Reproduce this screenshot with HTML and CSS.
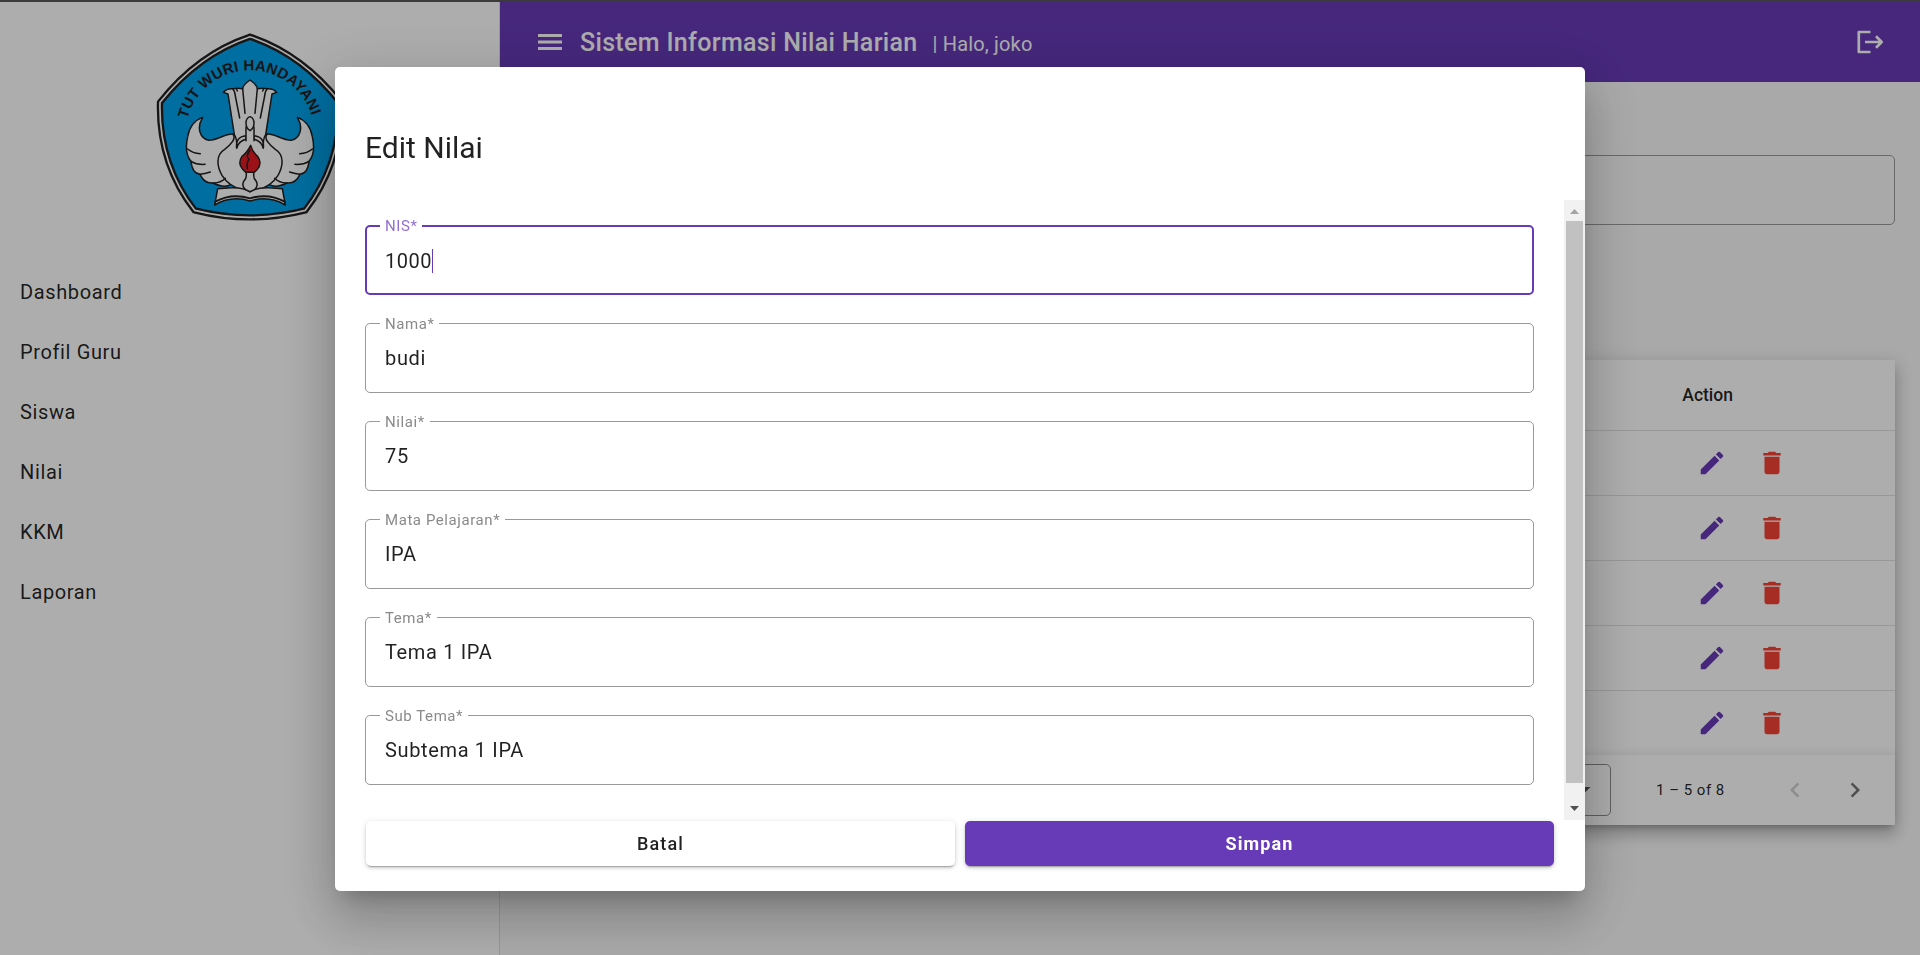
FILE: index.html
```html
<!DOCTYPE html>
<html lang="id">
<head>
<meta charset="utf-8">
<title>Sistem Informasi Nilai Harian</title>
<link rel="stylesheet" href="styles.css">
</head>
<body>
<svg class="defs" width="0" height="0">
  <symbol id="pencil" viewBox="0 0 24 24"><path d="M3 17.25V21h3.75L17.81 9.94l-3.75-3.75L3 17.25zM20.71 7.04a.996.996 0 0 0 0-1.41l-2.34-2.34a.996.996 0 0 0-1.41 0l-1.83 1.83 3.75 3.75 1.83-1.83z"/></symbol>
  <symbol id="trash" viewBox="0 0 24 24"><path d="M6 19c0 1.100.9 2 2 2h8c1.100 0 2-.9 2-2V7H6v12zM19 4h-3.500l-1-1h-5l-1 1H5v2h14V4z"/></symbol>
</svg>
<div class="app">
  <aside class="sidebar">
    <svg class="logo" viewBox="14 0 600 630">
      <defs><path id="arc" d="M126 297A194 194 0 0 1 502 297"/></defs>
      <path d="M314 50Q158 102 44 247Q39 430 148 571Q314 613 480 571Q589 430 584 247Q470 102 314 50Z" fill="#00a3ed" stroke="#231f20" stroke-width="19"/>
      <path d="M314 50Q158 102 44 247Q39 430 148 571Q314 613 480 571Q589 430 584 247Q470 102 314 50Z" fill="none" stroke="#fff" stroke-width="5"/>
      <text class="motto"><textPath href="#arc" textLength="502">TUT WURI HANDAYANI</textPath></text>
      <g fill="#fff" stroke="#231f20" stroke-width="4.500" stroke-linejoin="round" stroke-linecap="round">
        <path d="M273 382L248 222L234 217Q243 205 262 206Q278 203 292 206Q293 195 314 180Q335 195 336 206Q350 203 366 206Q385 205 394 217L380 222L355 382Z"/>
        <path d="M262 206Q269 213 270 228L283 294M292 206L299 280M336 206L329 280M366 206Q359 213 358 228L345 294M273 206L276 213M355 206L352 213" fill="none"/>
        <path d="M314 510C285 518 270 500 256 494Q236 505 203 489Q178 492 164 463Q140 460 137 424Q116 400 127 350Q135 305 172 292C152 325 165 355 190 361C220 360 240 340 262 342Q276 347 274 384Q276 362 302 354L326 354Q352 362 354 384Q352 347 366 342C388 340 408 360 438 361C463 355 476 325 456 292Q493 305 501 350Q512 400 491 424Q488 460 464 463Q450 492 425 489Q392 505 372 494C358 500 343 518 314 510Z"/>
        <path d="M127 387Q142 400 165 401M137 424Q155 435 179 433M164 463Q178 461 195 456M203 489Q225 490 240 475M501 387Q486 400 463 401M491 424Q473 435 449 433M464 463Q450 461 433 456M425 489Q403 490 388 475" fill="none"/>
        <path d="M262 342C275 355 255 375 238 388C210 405 215 440 230 466Q242 485 256 494M366 342C353 355 373 375 390 388C418 405 413 440 398 466Q386 485 372 494" fill="none"/>
        <path d="M274 384Q270 350 302 347L302 358Q280 364 274 384ZM354 384Q358 350 326 347L326 358Q348 364 354 384Z"/>
        <path d="M302 362L302 322L326 322L326 362L314 376Z" stroke="none"/>
        <path d="M302 362L302 322M326 322L326 362" fill="none"/>
        <path d="M314 290C330 296 330 322 314 332C298 322 298 296 314 290Z"/>
        <path d="M217 506L258 503Q295 502 314 516Q333 502 370 503L411 506L420 555Q370 525 314 543Q258 525 208 555Z"/>
        <path d="M210 545Q258 518 314 535Q370 518 418 545" fill="none" stroke-width="6"/>
        <path d="M302 457L326 457Q322 474 333 484Q340 500 327 509L314 515L301 509Q288 500 295 484Q306 474 302 457Z"/>
        <path d="M316 376Q322 397 337 409Q352 430 335 449L327 457H301L292 448Q276 430 290 409Q306 397 316 376Z" fill="#e31b23"/>
        <path d="M314 390Q300 410 311 418Q302 430 306 446" fill="none"/>
      </g>
    </svg>
    <nav class="menu">
      <a>Dashboard</a><a>Profil Guru</a><a>Siswa</a><a>Nilai</a><a>KKM</a><a>Laporan</a>
    </nav>
  </aside>
  <div class="main">
    <header class="topbar">
      <svg class="burger" viewBox="0 0 32 32"><path d="M4 8h24v3H4zM4 14.500h24v3H4zM4 21h24v3H4z"/></svg>
      <h1>Sistem Informasi Nilai Harian</h1>
      <span class="hello">| Halo, joko</span>
      <svg class="logout" viewBox="0 0 28 28"><path d="M13.500 4H1.800V24H13.500M8 14H25M19 8.300L24.700 14L19 19.700" fill="none" stroke="#fff" stroke-width="2.700" stroke-linejoin="round"/></svg>
    </header>
    <div class="content">
      <div class="search"></div>
      <section class="table">
        <div class="row head"><span>Action</span></div>
        <div class="row"><svg class="edit"><use href="#pencil"/></svg><svg class="del"><use href="#trash"/></svg></div>
        <div class="row"><svg class="edit"><use href="#pencil"/></svg><svg class="del"><use href="#trash"/></svg></div>
        <div class="row"><svg class="edit"><use href="#pencil"/></svg><svg class="del"><use href="#trash"/></svg></div>
        <div class="row"><svg class="edit"><use href="#pencil"/></svg><svg class="del"><use href="#trash"/></svg></div>
        <div class="row"><svg class="edit"><use href="#pencil"/></svg><svg class="del"><use href="#trash"/></svg></div>
        <div class="pager">
          <div class="select"><svg viewBox="0 0 10 5"><path d="M0 0h10L5 5z"/></svg></div>
          <span class="range">1 – 5 of 8</span>
          <svg class="chev off" viewBox="0 0 24 24"><path d="M15.410 7.410L14 6l-6 6 6 6 1.410-1.410L10.830 12z"/></svg>
          <svg class="chev" viewBox="0 0 24 24"><path d="M10 6L8.590 7.410 13.170 12l-4.580 4.590L10 18l6-6z"/></svg>
        </div>
      </section>
    </div>
  </div>
</div>
<div class="scrim">
  <div class="dialog">
    <h2>Edit Nilai</h2>
    <div class="body">
      <form class="fields">
        <fieldset class="focus"><legend>NIS*</legend><span>1000</span><i class="caret"></i></fieldset>
        <fieldset><legend>Nama*</legend><span>budi</span></fieldset>
        <fieldset><legend>Nilai*</legend><span>75</span></fieldset>
        <fieldset><legend>Mata Pelajaran*</legend><span>IPA</span></fieldset>
        <fieldset><legend>Tema*</legend><span>Tema 1 IPA</span></fieldset>
        <fieldset><legend>Sub Tema*</legend><span>Subtema 1 IPA</span></fieldset>
      </form>
      <div class="scrollbar">
        <svg viewBox="0 0 21 21"><path d="M6 14h9L10.500 9z" fill="#a3a3a3"/></svg>
        <div class="thumb"></div>
        <svg viewBox="0 0 21 21"><path d="M6 7h9l-4.500 5z" fill="#505050"/></svg>
      </div>
    </div>
    <div class="actions"><button class="plain">Batal</button><button class="primary">Simpan</button></div>
  </div>
</div>
</body>
</html>
```
FILE: styles.css
```css
* { box-sizing: border-box; }
body {
  margin: 0;
  height: 955px;
  overflow: hidden;
  font-family: Roboto, "Liberation Sans", sans-serif;
  color: rgba(0, 0, 0, .87);
}
.defs { display: block; }
.app {
  display: flex;
  height: 955px;
  border-top: 2px solid #9a9a9a;
  border-image: linear-gradient(#575757 50%, #9a9a9a 50%) 2;
  background: #fafafa;
}
.sidebar {
  width: 500px;
  flex: none;
  background: #fff;
  border-right: 1px solid #e0e0e0;
  padding-top: 18px;
}
.logo { display: block; width: 200px; height: 210px; margin: 0 auto; }
.motto { font: bold 45px "Liberation Sans", sans-serif; fill: #231f20; }
.menu { display: flex; flex-direction: column; padding: 32px 20px; }
.menu a { height: 60px; line-height: 60px; font-size: 20px; letter-spacing: .63px; }
.main { flex: 1; display: flex; flex-direction: column; }
.topbar {
  height: 80px;
  flex: none;
  display: flex;
  align-items: center;
  padding: 0 35px 0 34px;
  background: #673ab7;
  color: #fff;
}
.burger { width: 32px; height: 32px; fill: #fff; }
.topbar h1 { margin: 0 0 0 14px; font-size: 25px; font-weight: 500; letter-spacing: .33px; }
.hello { margin: 4px 0 0 15px; font-size: 20px; letter-spacing: .17px; }
.logout { width: 28px; height: 28px; margin-left: auto; }
.content { padding: 73px 25px 0; }
.search { height: 70px; border: 1px solid #9b9b9b; border-radius: 5px; }
.table {
  margin-top: 135px;
  background: #fff;
  box-shadow: 0 6px 6px -4px rgba(0,0,0,.2), 0 10px 13px 1px rgba(0,0,0,.14), 0 4px 18px 3px rgba(0,0,0,.12);
}
.row {
  height: 65px;
  display: flex;
  align-items: center;
  justify-content: flex-end;
  border-top: 1px solid #e0e0e0;
  padding-right: 108px;
}
.row.head { height: 70px; border: 0; padding-right: 162px; font-size: 17.5px; font-weight: 500; }
.row svg { width: 30px; height: 30px; }
.edit { fill: #673ab7; margin-right: 30px; }
.del { fill: #f44336; }
.pager {
  height: 70px;
  display: flex;
  align-items: center;
  justify-content: flex-end;
  padding-right: 25px;
  background: #fff;
  box-shadow: 0 -2px 8px rgba(0,0,0,.08);
}
.select {
  width: 110px;
  height: 52px;
  display: flex;
  align-items: center;
  justify-content: flex-end;
  padding-right: 19px;
  border: 1px solid #8c8c8c;
  border-radius: 5px;
}
.select svg { width: 13px; height: 6px; fill: #555; }
.range { width: 69px; margin: 0 55px 0 45px; font-size: 15px; letter-spacing: .5px; white-space: nowrap; }
.chev { width: 30px; height: 30px; fill: #757575; }
.chev.off { margin-right: 30px; fill: #d0d0d0; }
.scrim {
  position: fixed;
  inset: 0;
  background: rgba(0, 0, 0, .32);
  padding-top: 67px;
}
.dialog {
  width: 1250px;
  height: 824px;
  margin: 0 auto;
  background: #fff;
  border-radius: 5px;
  box-shadow: 0 14px 19px -9px rgba(0,0,0,.2), 0 30px 48px 4px rgba(0,0,0,.14), 0 11px 58px 10px rgba(0,0,0,.12);
}
.dialog h2 { margin: 0; height: 133px; padding: 61px 30px 0; font-size: 30px; line-height: 40px; font-weight: 400; }
.body { display: flex; height: 620px; }
.fields { flex: 1; padding: 16px 30px 0; display: flex; flex-direction: column; gap: 19px; }
fieldset {
  height: 79px;
  margin: 0;
  padding: 14px 18px 0 14px;
  display: flex;
  align-items: flex-start;
  border: 1px solid #999;
  border-radius: 5px;
  font-size: 20px;
  line-height: 24px;
  letter-spacing: .65px;
}
fieldset span { margin-left: 5px; }
legend { height: 18px; line-height: 20px; padding: 0 5px; font-size: 15px; letter-spacing: .57px; color: #8a8a8a; }
.focus { border: 2px solid #673ab7; padding: 13px 18px 0 13px; }
.focus legend { height: 20px; line-height: 20px; color: #9370d0; }
.focus span { letter-spacing: .5px; }
.caret { width: 1px; height: 24px; background: #673ab7; }
.scrollbar { width: 21px; display: flex; flex-direction: column; background: #f1f1f1; }
.scrollbar svg { width: 21px; height: 21px; display: block; }
.thumb { height: 562px; margin: 0 2px 16px; background: #c1c1c1; }
.actions { display: flex; gap: 10px; padding: 1px 31px 0; }
button {
  flex: 1;
  height: 45px;
  border: 0;
  border-radius: 5px;
  font: 700 18px Roboto, sans-serif;
  letter-spacing: 1.1px;
  box-shadow: 0 3px 1px -2px rgba(0,0,0,.2), 0 2px 3px rgba(0,0,0,.14), 0 1px 6px rgba(0,0,0,.12);
}
.plain { background: #fff; color: rgba(0,0,0,.87); font-weight: 500; }
.primary { background: #673ab7; color: #fff; }
```
